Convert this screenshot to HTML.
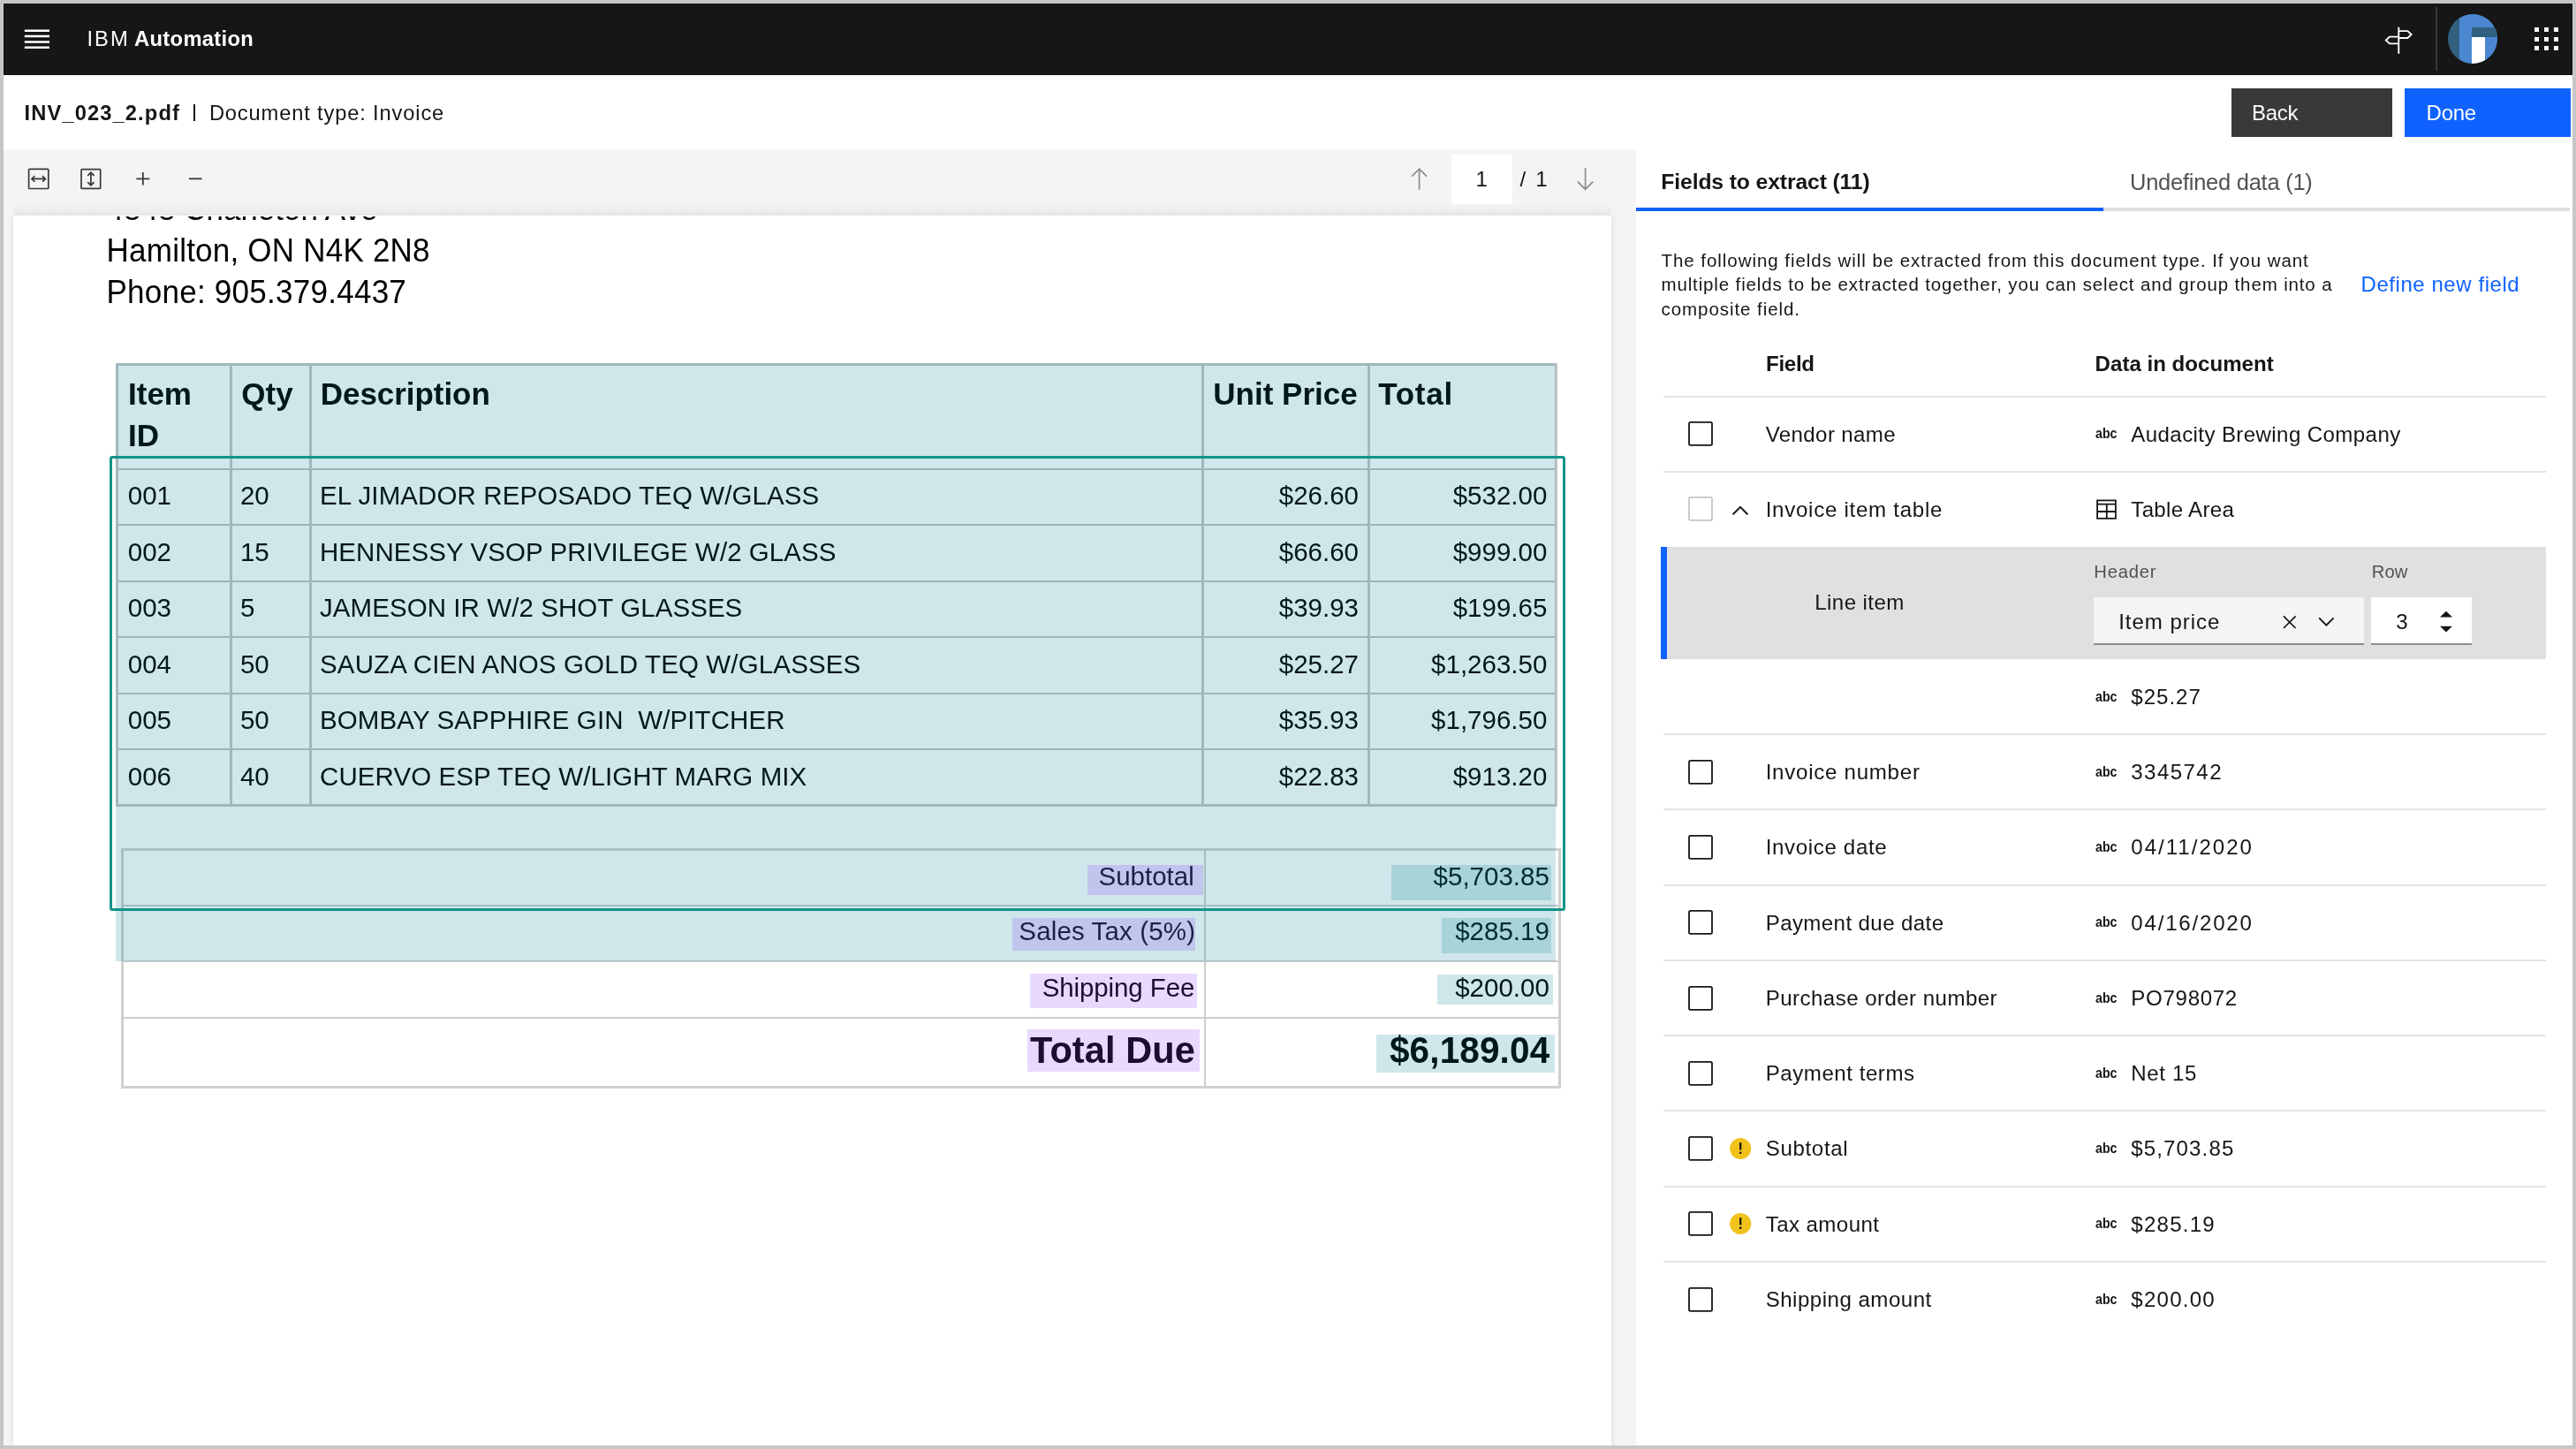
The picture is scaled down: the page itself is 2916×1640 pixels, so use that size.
<!DOCTYPE html>
<html lang="en"><head><meta charset="utf-8"><title>IBM Automation - Document processing</title>
<style>
html,body{margin:0;padding:0}
body{width:2916px;height:1640px;position:relative;overflow:hidden;background:#fff;font-family:"Liberation Sans", sans-serif}
body div,body span,body svg{position:absolute;box-sizing:border-box}
span{white-space:pre}
</style></head><body>
<div style="left:0;top:0;width:2916px;height:1640px;will-change:transform">
<div style="left:0px;top:0px;width:2916px;height:1640px;background:#ffffff;"></div>
<div style="left:4px;top:4px;width:2908px;height:81px;background:#161616;"></div>
<div style="left:4px;top:169px;width:1848px;height:1467px;background:#f4f4f4;"></div>
<div style="left:15px;top:244px;width:1809px;height:1396px;background:#ffffff;box-shadow:0 0 7px rgba(0,0,0,0.10);"></div>
<div style="left:15px;top:244px;width:1809px;height:1396px;overflow:hidden">
<div style="left:-15px;top:-244px;width:2916px;height:1640px">
<div style="left:0;top:245px;width:1000px;height:12px;overflow:hidden"><div style="left:0;top:-245px;width:1000px;height:300px">
<span style="top:216.3px;font-size:35px;line-height:42px;color:#000000;left:120.6px;transform:scaleY(1.042);transform-origin:left 33.5px;">4848 Charleton Ave</span>
</div></div>
<span style="top:262.8px;font-size:35px;line-height:42px;color:#000000;letter-spacing:0.22px;left:120.6px;transform:scaleY(1.042);transform-origin:left 33.5px;">Hamilton, ON N4K 2N8</span>
<span style="top:309.7px;font-size:35px;line-height:42px;color:#000000;letter-spacing:0.26px;left:120.4px;transform:scaleY(1.042);transform-origin:left 33.5px;">Phone: 905.379.4437</span>
<div style="left:131px;top:411px;width:1632px;height:502px;background:transparent;border:3px solid #c6c6c6;"></div>
<div style="left:131px;top:530px;width:1632px;height:2px;background:#c2c2c2;"></div>
<div style="left:131px;top:593px;width:1632px;height:2px;background:#c2c2c2;"></div>
<div style="left:131px;top:657px;width:1632px;height:2px;background:#c2c2c2;"></div>
<div style="left:131px;top:720px;width:1632px;height:2px;background:#c2c2c2;"></div>
<div style="left:131px;top:784px;width:1632px;height:2px;background:#c2c2c2;"></div>
<div style="left:131px;top:847px;width:1632px;height:2px;background:#c2c2c2;"></div>
<div style="left:260px;top:411px;width:3px;height:502px;background:#c6c6c6;"></div>
<div style="left:350px;top:411px;width:3px;height:502px;background:#c6c6c6;"></div>
<div style="left:1360px;top:411px;width:3px;height:502px;background:#c6c6c6;"></div>
<div style="left:1548px;top:411px;width:3px;height:502px;background:#c6c6c6;"></div>
<span style="top:424.8px;font-size:35px;line-height:42px;color:#000000;font-weight:700;left:145px;transform:scaleY(1.026);transform-origin:left 33.5px;">Item</span>
<span style="top:471.5px;font-size:35px;line-height:42px;color:#000000;font-weight:700;left:145px;transform:scaleY(1.026);transform-origin:left 33.5px;">ID</span>
<span style="top:424.8px;font-size:35px;line-height:42px;color:#000000;font-weight:700;left:273.3px;transform:scaleY(1.026);transform-origin:left 33.5px;">Qty</span>
<span style="top:424.8px;font-size:35px;line-height:42px;color:#000000;font-weight:700;letter-spacing:-0.05px;left:362.8px;transform:scaleY(1.026);transform-origin:left 33.5px;">Description</span>
<span style="top:424.8px;font-size:35px;line-height:42px;color:#000000;font-weight:700;left:1373.3px;transform:scaleY(1.026);transform-origin:left 33.5px;">Unit Price</span>
<span style="top:424.8px;font-size:35px;line-height:42px;color:#000000;font-weight:700;letter-spacing:0.75px;left:1560.2px;transform:scaleY(1.026);transform-origin:left 33.5px;">Total</span>
<span style="top:543.1px;font-size:29.5px;line-height:36px;color:#000000;left:144.8px;transform:scaleY(1.025);transform-origin:left 28.5px;">001</span>
<span style="top:543.1px;font-size:29.5px;line-height:36px;color:#000000;left:271.9px;transform:scaleY(1.025);transform-origin:left 28.5px;">20</span>
<span style="top:543.1px;font-size:29.5px;line-height:36px;color:#000000;letter-spacing:0.1px;left:362px;transform:scaleY(1.025);transform-origin:left 28.5px;">EL JIMADOR REPOSADO TEQ W/GLASS</span>
<span style="top:543.1px;font-size:29.5px;line-height:36px;color:#000000;right:1378px;transform:scaleY(1.025);transform-origin:right 28.5px;">$26.60</span>
<span style="top:543.1px;font-size:29.5px;line-height:36px;color:#000000;right:1164.7px;transform:scaleY(1.025);transform-origin:right 28.5px;">$532.00</span>
<span style="top:606.58px;font-size:29.5px;line-height:36px;color:#000000;left:144.8px;transform:scaleY(1.025);transform-origin:left 28.5px;">002</span>
<span style="top:606.58px;font-size:29.5px;line-height:36px;color:#000000;left:271.9px;transform:scaleY(1.025);transform-origin:left 28.5px;">15</span>
<span style="top:606.58px;font-size:29.5px;line-height:36px;color:#000000;letter-spacing:0.06px;left:362px;transform:scaleY(1.025);transform-origin:left 28.5px;">HENNESSY VSOP PRIVILEGE W/2 GLASS</span>
<span style="top:606.58px;font-size:29.5px;line-height:36px;color:#000000;right:1378px;transform:scaleY(1.025);transform-origin:right 28.5px;">$66.60</span>
<span style="top:606.58px;font-size:29.5px;line-height:36px;color:#000000;right:1164.7px;transform:scaleY(1.025);transform-origin:right 28.5px;">$999.00</span>
<span style="top:670.06px;font-size:29.5px;line-height:36px;color:#000000;left:144.8px;transform:scaleY(1.025);transform-origin:left 28.5px;">003</span>
<span style="top:670.06px;font-size:29.5px;line-height:36px;color:#000000;left:271.9px;transform:scaleY(1.025);transform-origin:left 28.5px;">5</span>
<span style="top:670.06px;font-size:29.5px;line-height:36px;color:#000000;letter-spacing:0.07px;left:362px;transform:scaleY(1.025);transform-origin:left 28.5px;">JAMESON IR W/2 SHOT GLASSES</span>
<span style="top:670.06px;font-size:29.5px;line-height:36px;color:#000000;right:1378px;transform:scaleY(1.025);transform-origin:right 28.5px;">$39.93</span>
<span style="top:670.06px;font-size:29.5px;line-height:36px;color:#000000;right:1164.7px;transform:scaleY(1.025);transform-origin:right 28.5px;">$199.65</span>
<span style="top:733.54px;font-size:29.5px;line-height:36px;color:#000000;left:144.8px;transform:scaleY(1.025);transform-origin:left 28.5px;">004</span>
<span style="top:733.54px;font-size:29.5px;line-height:36px;color:#000000;left:271.9px;transform:scaleY(1.025);transform-origin:left 28.5px;">50</span>
<span style="top:733.54px;font-size:29.5px;line-height:36px;color:#000000;letter-spacing:0.14px;left:362px;transform:scaleY(1.025);transform-origin:left 28.5px;">SAUZA CIEN ANOS GOLD TEQ W/GLASSES</span>
<span style="top:733.54px;font-size:29.5px;line-height:36px;color:#000000;right:1378px;transform:scaleY(1.025);transform-origin:right 28.5px;">$25.27</span>
<span style="top:733.54px;font-size:29.5px;line-height:36px;color:#000000;right:1164.7px;transform:scaleY(1.025);transform-origin:right 28.5px;">$1,263.50</span>
<span style="top:797.02px;font-size:29.5px;line-height:36px;color:#000000;left:144.8px;transform:scaleY(1.025);transform-origin:left 28.5px;">005</span>
<span style="top:797.02px;font-size:29.5px;line-height:36px;color:#000000;left:271.9px;transform:scaleY(1.025);transform-origin:left 28.5px;">50</span>
<span style="top:797.02px;font-size:29.5px;line-height:36px;color:#000000;letter-spacing:0.11px;left:362px;transform:scaleY(1.025);transform-origin:left 28.5px;">BOMBAY SAPPHIRE GIN  W/PITCHER</span>
<span style="top:797.02px;font-size:29.5px;line-height:36px;color:#000000;right:1378px;transform:scaleY(1.025);transform-origin:right 28.5px;">$35.93</span>
<span style="top:797.02px;font-size:29.5px;line-height:36px;color:#000000;right:1164.7px;transform:scaleY(1.025);transform-origin:right 28.5px;">$1,796.50</span>
<span style="top:860.5px;font-size:29.5px;line-height:36px;color:#000000;left:144.8px;transform:scaleY(1.025);transform-origin:left 28.5px;">006</span>
<span style="top:860.5px;font-size:29.5px;line-height:36px;color:#000000;left:271.9px;transform:scaleY(1.025);transform-origin:left 28.5px;">40</span>
<span style="top:860.5px;font-size:29.5px;line-height:36px;color:#000000;letter-spacing:0.09px;left:362px;transform:scaleY(1.025);transform-origin:left 28.5px;">CUERVO ESP TEQ W/LIGHT MARG MIX</span>
<span style="top:860.5px;font-size:29.5px;line-height:36px;color:#000000;right:1378px;transform:scaleY(1.025);transform-origin:right 28.5px;">$22.83</span>
<span style="top:860.5px;font-size:29.5px;line-height:36px;color:#000000;right:1164.7px;transform:scaleY(1.025);transform-origin:right 28.5px;">$913.20</span>
<div style="left:137px;top:960px;width:1630px;height:272px;background:transparent;border:3px solid #d0d0d0;"></div>
<div style="left:137px;top:1024px;width:1630px;height:2px;background:#cdcdcd;"></div>
<div style="left:137px;top:1087px;width:1630px;height:2px;background:#cdcdcd;"></div>
<div style="left:137px;top:1151px;width:1630px;height:2px;background:#cdcdcd;"></div>
<div style="left:1363px;top:961px;width:2px;height:269.6px;background:#cdcdcd;"></div>
<span style="top:973.5px;font-size:29.5px;line-height:36px;color:#000000;right:1564.3px;transform:scaleY(1.025);transform-origin:right 28.5px;">Subtotal</span>
<span style="top:1036.3px;font-size:29.5px;line-height:36px;color:#000000;letter-spacing:0.14px;right:1562.86px;transform:scaleY(1.025);transform-origin:right 28.5px;">Sales Tax (5%)</span>
<span style="top:1099.9px;font-size:29.5px;line-height:36px;color:#000000;letter-spacing:-0.1px;right:1563.7px;transform:scaleY(1.025);transform-origin:right 28.5px;">Shipping Fee</span>
<span style="top:1164.1px;font-size:41.5px;line-height:50px;color:#000000;font-weight:700;letter-spacing:0.1px;right:1563.1px;transform:scaleY(1.043);transform-origin:right 39.5px;">Total Due</span>
<span style="top:973.5px;font-size:29.5px;line-height:36px;color:#000000;right:1162.2px;transform:scaleY(1.025);transform-origin:right 28.5px;">$5,703.85</span>
<span style="top:1036.3px;font-size:29.5px;line-height:36px;color:#000000;right:1162.2px;transform:scaleY(1.025);transform-origin:right 28.5px;">$285.19</span>
<span style="top:1099.9px;font-size:29.5px;line-height:36px;color:#000000;right:1162.2px;transform:scaleY(1.025);transform-origin:right 28.5px;">$200.00</span>
<span style="top:1165.3px;font-size:40.5px;line-height:49px;color:#000000;font-weight:700;letter-spacing:0.14px;right:1161.66px;transform:scaleY(1.058);transform-origin:right 38.5px;">$6,189.04</span>
<div style="left:131px;top:411px;width:1630px;height:677px;background:rgba(0,127,143,0.188);"></div>
<div style="left:1231px;top:979px;width:131px;height:34px;background:rgba(138,63,252,0.2);"></div>
<div style="left:1146px;top:1039px;width:207px;height:37px;background:rgba(138,63,252,0.2);"></div>
<div style="left:1166px;top:1102px;width:189px;height:39px;background:rgba(138,63,252,0.2);"></div>
<div style="left:1163px;top:1165px;width:195px;height:48px;background:rgba(138,63,252,0.2);"></div>
<div style="left:1575px;top:979px;width:181px;height:40px;background:rgba(0,127,143,0.188);"></div>
<div style="left:1632px;top:1039px;width:124px;height:40px;background:rgba(0,127,143,0.188);"></div>
<div style="left:1627px;top:1103px;width:131px;height:34px;background:rgba(0,127,143,0.188);"></div>
<div style="left:1558px;top:1171px;width:202px;height:43px;background:rgba(0,127,143,0.188);"></div>
<div style="left:124px;top:516px;width:1648px;height:515px;background:transparent;border:3px solid #129488;border-radius:3px;"></div>
</div></div>
<div style="left:4px;top:169px;width:1848px;height:75px;background:#f4f4f4;"></div>
<div style="left:15px;top:231px;width:1809px;height:13px;background:linear-gradient(to bottom, rgba(0,0,0,0) 0%, rgba(0,0,0,0.055) 100%);"></div>
<div style="left:1852px;top:169px;width:1060px;height:1467px;background:#ffffff;"></div>
<svg style="left:26px;top:30px;width:32px;height:28px;" viewBox="26 30 32 28"><path d="M27.8 34.7H56M27.8 41H56M27.8 47.4H56M27.8 53.7H56" stroke="#fff" stroke-width="2.5" fill="none"/></svg>
<span style="top:30px;font-size:23.7px;line-height:29px;color:#ffffff;letter-spacing:2.09px;left:98.4px;">IBM</span>
<span style="top:30px;font-size:23.7px;line-height:29px;color:#ffffff;font-weight:700;letter-spacing:0.34px;left:152.1px;">Automation</span>
<svg style="left:2696px;top:26px;width:40px;height:40px;" viewBox="2696 26 40 40"><g fill="none" stroke="#fff" stroke-width="1.9" stroke-linejoin="miter"><path d="M2715.3 30.6V60.8"/><path d="M2715.3 35.1H2725.5L2729.6 39L2725.5 43H2715.3"/><path d="M2715.3 41.6H2705L2700.8 45.5L2705 49.4H2715.3"/></g></svg>
<div style="left:2757px;top:8px;width:2px;height:72px;background:#393939;"></div>
<div style="left:2770.7px;top:15.9px;width:56.4px;height:56.4px;border-radius:50%;overflow:hidden;background:#34607f"><div style="left:13.3px;top:0;width:44px;height:57px;background:#4a87d0"></div><div style="left:27.5px;top:15.1px;width:30px;height:11.5px;background:#2f6080"></div><div style="left:27.5px;top:26.6px;width:14.5px;height:31px;background:#ffffff"></div></div>
<div style="left:2869px;top:31px;width:5px;height:5px;background:#ffffff;"></div>
<div style="left:2869px;top:42px;width:5px;height:5px;background:#ffffff;"></div>
<div style="left:2869px;top:52px;width:5px;height:5px;background:#ffffff;"></div>
<div style="left:2880px;top:31px;width:5px;height:5px;background:#ffffff;"></div>
<div style="left:2880px;top:42px;width:5px;height:5px;background:#ffffff;"></div>
<div style="left:2880px;top:52px;width:5px;height:5px;background:#ffffff;"></div>
<div style="left:2891px;top:31px;width:5px;height:5px;background:#ffffff;"></div>
<div style="left:2891px;top:42px;width:5px;height:5px;background:#ffffff;"></div>
<div style="left:2891px;top:52px;width:5px;height:5px;background:#ffffff;"></div>
<span style="top:113.5px;font-size:23.7px;line-height:29px;color:#161616;font-weight:700;letter-spacing:1.11px;left:27.6px;">INV_023_2.pdf</span>
<div style="left:219px;top:118px;width:2px;height:19px;background:#161616;"></div>
<span style="top:113.5px;font-size:23.7px;line-height:29px;color:#161616;letter-spacing:0.85px;left:236.9px;">Document type: Invoice</span>
<div style="left:2526px;top:100px;width:182px;height:55px;background:#393939;"></div>
<span style="top:112.9px;font-size:24px;line-height:29px;color:#ffffff;letter-spacing:-0.32px;left:2549px;">Back</span>
<div style="left:2722px;top:100px;width:188px;height:55px;background:#0f62fe;"></div>
<span style="top:112.9px;font-size:24px;line-height:29px;color:#ffffff;letter-spacing:-0.26px;left:2746.6px;">Done</span>
<svg style="left:28px;top:186px;width:32px;height:32px;" viewBox="28 186 32 32"><g fill="none" stroke="#393939" stroke-width="1.7"><rect x="32.6" y="191.3" width="22.2" height="22.2" rx="1"/><path d="M36 202.4H51.4M39.4 199.2L36 202.4L39.4 205.6M48 199.2L51.4 202.4L48 205.6"/></g></svg>
<svg style="left:87px;top:186px;width:32px;height:32px;" viewBox="87 186 32 32"><g fill="none" stroke="#393939" stroke-width="1.7"><rect x="92" y="191.7" width="21.7" height="21.7" rx="1"/><path d="M102.9 195.3V209.8M99.2 198.9L102.9 195.3L106.6 198.9M99.2 206.2L102.9 209.8L106.6 206.2"/></g></svg>
<svg style="left:150px;top:190px;width:24px;height:24px;" viewBox="150 190 24 24"><path d="M154.3 202.3H169.3M161.8 195V209.6" fill="none" stroke="#393939" stroke-width="1.8"/></svg>
<svg style="left:210px;top:196px;width:22px;height:12px;" viewBox="210 196 22 12"><path d="M213.9 202.3H228.5" fill="none" stroke="#393939" stroke-width="1.8"/></svg>
<svg style="left:1594px;top:186px;width:24px;height:33px;" viewBox="1594 186 24 33"><path d="M1606.6 214.7V191M1598.2 199.6L1606.6 191.2L1615 199.6" fill="none" stroke="#8d8d8d" stroke-width="1.7"/></svg>
<div style="left:1643px;top:175px;width:69px;height:56px;background:#ffffff;"></div>
<span style="top:187.5px;font-size:24px;line-height:29px;color:#161616;left:1670.5px;">1</span>
<span style="top:187.5px;font-size:24px;line-height:29px;color:#161616;letter-spacing:2.16px;left:1720.5px;">/ 1</span>
<svg style="left:1782px;top:186px;width:25px;height:33px;" viewBox="1782 186 25 33"><path d="M1794.6 190.2V214.2M1786 205.6L1794.6 214.2L1803.2 205.6" fill="none" stroke="#8d8d8d" stroke-width="1.7"/></svg>
<span style="top:191.1px;font-size:24.7px;line-height:30px;color:#161616;font-weight:700;letter-spacing:-0.11px;left:1880.3px;">Fields to extract (11)</span>
<span style="top:190.5px;font-size:25.5px;line-height:31px;color:#525252;letter-spacing:-0.26px;left:2411px;">Undefined data (1)</span>
<div style="left:2381px;top:235px;width:528px;height:4px;background:#e0e0e0;"></div>
<div style="left:1852px;top:235px;width:529px;height:4px;background:#0f62fe;"></div>
<span style="top:281.5px;font-size:20.5px;line-height:25px;color:#161616;letter-spacing:0.95px;left:1880.5px;">The following fields will be extracted from this document type. If you want</span>
<span style="top:309.2px;font-size:20.5px;line-height:25px;color:#161616;letter-spacing:0.86px;left:1880.5px;">multiple fields to be extracted together, you can select and group them into a</span>
<span style="top:337px;font-size:20.5px;line-height:25px;color:#161616;letter-spacing:0.94px;left:1880.5px;">composite field.</span>
<span style="top:307px;font-size:24px;line-height:29px;color:#0f62fe;letter-spacing:0.56px;left:2672.5px;">Define new field</span>
<span style="top:396.8px;font-size:24.1px;line-height:29px;color:#161616;font-weight:700;letter-spacing:-0.31px;left:1999px;">Field</span>
<span style="top:396.8px;font-size:24.1px;line-height:29px;color:#161616;font-weight:700;left:2371.6px;">Data in document</span>
<div style="left:1883px;top:448px;width:999px;height:2px;background:#e3e3e3;"></div>
<svg style="left:1909px;top:475.35px;width:32px;height:32px;" viewBox="1909 475.35 32 32"><rect x="1912" y="478.25" width="26" height="26" rx="1.6" fill="#fff" stroke="#161616" stroke-width="1.8"/></svg>
<span style="top:476.55px;font-size:24.1px;line-height:29px;color:#161616;letter-spacing:0.37px;left:1998.7px;">Vendor name</span>
<span style="top:480.25px;font-size:16.5px;line-height:20px;color:#161616;font-weight:700;left:2371.6px;transform:scaleX(0.86);transform-origin:left top;">abc</span>
<span style="top:476.55px;font-size:24.1px;line-height:29px;color:#161616;letter-spacing:0.39px;left:2412.3px;">Audacity Brewing Company</span>
<div style="left:1883px;top:533px;width:999px;height:2px;background:#e3e3e3;"></div>
<svg style="left:1909px;top:560.4px;width:32px;height:32px;" viewBox="1909 560.4 32 32"><rect x="1912" y="563.3" width="26" height="26" rx="1.6" fill="#fff" stroke="#c6c6c6" stroke-width="1.8"/></svg>
<svg style="left:1956px;top:566px;width:28px;height:22px;" viewBox="1956 566 28 22"><path d="M1961.6 582.2L1970 573.8L1978.4 582.2" fill="none" stroke="#161616" stroke-width="2"/></svg>
<span style="top:561.6px;font-size:24.1px;line-height:29px;color:#161616;letter-spacing:0.72px;left:1998.7px;">Invoice item table</span>
<svg style="left:2370px;top:562px;width:30px;height:30px;" viewBox="2370 562 30 30"><g fill="none" stroke="#161616" stroke-width="1.8"><rect x="2374.1" y="566.4" width="20.8" height="20.4"/><path d="M2374.1 570.6H2394.9M2374.1 579H2394.9M2384.8 570.6V586.8"/></g></svg>
<span style="top:561.6px;font-size:24.1px;line-height:29px;color:#161616;letter-spacing:0.3px;left:2412.3px;">Table Area</span>
<div style="left:1880px;top:619px;width:1002px;height:127px;background:#e0e0e0;"></div>
<div style="left:1880px;top:619px;width:7px;height:127px;background:#0f62fe;"></div>
<span style="top:667px;font-size:24.1px;line-height:29px;color:#161616;letter-spacing:0.4px;left:2054.3px;">Line item</span>
<span style="top:635.3px;font-size:20.3px;line-height:25px;color:#525252;letter-spacing:0.75px;left:2370.3px;">Header</span>
<span style="top:635.3px;font-size:20.3px;line-height:25px;color:#525252;letter-spacing:-0.04px;left:2684.8px;">Row</span>
<div style="left:2370px;top:676px;width:306px;height:54px;background:#f4f4f4;border-bottom:2px solid #8d8d8d;"></div>
<span style="top:689px;font-size:24.1px;line-height:29px;color:#161616;letter-spacing:0.95px;left:2398.2px;">Item price</span>
<svg style="left:2580px;top:692px;width:24px;height:24px;" viewBox="2580 692 24 24"><path d="M2585 697.4L2598.6 711M2598.6 697.4L2585 711" fill="none" stroke="#161616" stroke-width="1.7"/></svg>
<svg style="left:2620px;top:692px;width:28px;height:24px;" viewBox="2620 692 28 24"><path d="M2625.2 699.4L2633.4 707.6L2641.6 699.4" fill="none" stroke="#161616" stroke-width="1.9"/></svg>
<div style="left:2684px;top:676px;width:114px;height:54px;background:#ffffff;border-bottom:2px solid #8d8d8d;"></div>
<span style="top:689px;font-size:24.1px;line-height:29px;color:#161616;left:2712.2px;">3</span>
<svg style="left:2758px;top:688px;width:22px;height:32px;" viewBox="2758 688 22 32"><path d="M2762 698.6L2769 691.8L2776 698.6ZM2762 708.8L2769 715.6L2776 708.8Z" fill="#161616"/></svg>
<span style="top:777.8px;font-size:16.5px;line-height:20px;color:#161616;font-weight:700;left:2371.6px;transform:scaleX(0.86);transform-origin:left top;">abc</span>
<span style="top:774.1px;font-size:24.1px;line-height:29px;color:#161616;letter-spacing:0.96px;left:2412.3px;">$25.27</span>
<div style="left:1883px;top:830px;width:999px;height:2px;background:#e3e3e3;"></div>
<svg style="left:1909px;top:857.9px;width:32px;height:32px;" viewBox="1909 857.9 32 32"><rect x="1912" y="860.8" width="26" height="26" rx="1.6" fill="#fff" stroke="#161616" stroke-width="1.8"/></svg>
<span style="top:859.1px;font-size:24.1px;line-height:29px;color:#161616;letter-spacing:0.73px;left:1998.7px;">Invoice number</span>
<span style="top:862.8px;font-size:16.5px;line-height:20px;color:#161616;font-weight:700;left:2371.6px;transform:scaleX(0.86);transform-origin:left top;">abc</span>
<span style="top:859.1px;font-size:24.1px;line-height:29px;color:#161616;letter-spacing:1.41px;left:2412.3px;">3345742</span>
<div style="left:1883px;top:915px;width:999px;height:2px;background:#e3e3e3;"></div>
<svg style="left:1909px;top:943.15px;width:32px;height:32px;" viewBox="1909 943.15 32 32"><rect x="1912" y="946.05" width="26" height="26" rx="1.6" fill="#fff" stroke="#161616" stroke-width="1.8"/></svg>
<span style="top:944.35px;font-size:24.1px;line-height:29px;color:#161616;letter-spacing:0.64px;left:1998.7px;">Invoice date</span>
<span style="top:948.05px;font-size:16.5px;line-height:20px;color:#161616;font-weight:700;left:2371.6px;transform:scaleX(0.86);transform-origin:left top;">abc</span>
<span style="top:944.35px;font-size:24.1px;line-height:29px;color:#161616;letter-spacing:1.98px;left:2412.3px;">04/11/2020</span>
<div style="left:1883px;top:1001px;width:999px;height:2px;background:#e3e3e3;"></div>
<svg style="left:1909px;top:1028.4px;width:32px;height:32px;" viewBox="1909 1028.4 32 32"><rect x="1912" y="1031.3" width="26" height="26" rx="1.6" fill="#fff" stroke="#161616" stroke-width="1.8"/></svg>
<span style="top:1029.6px;font-size:24.1px;line-height:29px;color:#161616;letter-spacing:0.39px;left:1998.7px;">Payment due date</span>
<span style="top:1033.3px;font-size:16.5px;line-height:20px;color:#161616;font-weight:700;left:2371.6px;transform:scaleX(0.86);transform-origin:left top;">abc</span>
<span style="top:1029.6px;font-size:24.1px;line-height:29px;color:#161616;letter-spacing:1.78px;left:2412.3px;">04/16/2020</span>
<div style="left:1883px;top:1086px;width:999px;height:2px;background:#e3e3e3;"></div>
<svg style="left:1909px;top:1113.65px;width:32px;height:32px;" viewBox="1909 1113.65 32 32"><rect x="1912" y="1116.55" width="26" height="26" rx="1.6" fill="#fff" stroke="#161616" stroke-width="1.8"/></svg>
<span style="top:1114.85px;font-size:24.1px;line-height:29px;color:#161616;letter-spacing:0.44px;left:1998.7px;">Purchase order number</span>
<span style="top:1118.55px;font-size:16.5px;line-height:20px;color:#161616;font-weight:700;left:2371.6px;transform:scaleX(0.86);transform-origin:left top;">abc</span>
<span style="top:1114.85px;font-size:24.1px;line-height:29px;color:#161616;letter-spacing:0.68px;left:2412.3px;">PO798072</span>
<div style="left:1883px;top:1171px;width:999px;height:2px;background:#e3e3e3;"></div>
<svg style="left:1909px;top:1198.9px;width:32px;height:32px;" viewBox="1909 1198.9 32 32"><rect x="1912" y="1201.8" width="26" height="26" rx="1.6" fill="#fff" stroke="#161616" stroke-width="1.8"/></svg>
<span style="top:1200.1px;font-size:24.1px;line-height:29px;color:#161616;letter-spacing:0.53px;left:1998.7px;">Payment terms</span>
<span style="top:1203.8px;font-size:16.5px;line-height:20px;color:#161616;font-weight:700;left:2371.6px;transform:scaleX(0.86);transform-origin:left top;">abc</span>
<span style="top:1200.1px;font-size:24.1px;line-height:29px;color:#161616;letter-spacing:0.6px;left:2412.3px;">Net 15</span>
<div style="left:1883px;top:1256px;width:999px;height:2px;background:#e3e3e3;"></div>
<svg style="left:1909px;top:1284.15px;width:32px;height:32px;" viewBox="1909 1284.15 32 32"><rect x="1912" y="1287.05" width="26" height="26" rx="1.6" fill="#fff" stroke="#161616" stroke-width="1.8"/></svg>
<svg style="left:1956px;top:1286.05px;width:28px;height:28px;" viewBox="1956 1286.05 28 28"><circle cx="1970.2" cy="1300.05" r="12" fill="#f1c21b"/><rect x="1969.1" y="1293.25" width="2.2" height="8.3" fill="#161616"/><rect x="1969.1" y="1303.65" width="2.2" height="2.4" fill="#161616"/></svg>
<span style="top:1285.35px;font-size:24.1px;line-height:29px;color:#161616;letter-spacing:0.65px;left:1998.7px;">Subtotal</span>
<span style="top:1289.05px;font-size:16.5px;line-height:20px;color:#161616;font-weight:700;left:2371.6px;transform:scaleX(0.86);transform-origin:left top;">abc</span>
<span style="top:1285.35px;font-size:24.1px;line-height:29px;color:#161616;letter-spacing:1.1px;left:2412.3px;">$5,703.85</span>
<div style="left:1883px;top:1342px;width:999px;height:2px;background:#e3e3e3;"></div>
<svg style="left:1909px;top:1369.4px;width:32px;height:32px;" viewBox="1909 1369.4 32 32"><rect x="1912" y="1372.3" width="26" height="26" rx="1.6" fill="#fff" stroke="#161616" stroke-width="1.8"/></svg>
<svg style="left:1956px;top:1371.3px;width:28px;height:28px;" viewBox="1956 1371.3 28 28"><circle cx="1970.2" cy="1385.3" r="12" fill="#f1c21b"/><rect x="1969.1" y="1378.5" width="2.2" height="8.3" fill="#161616"/><rect x="1969.1" y="1388.9" width="2.2" height="2.4" fill="#161616"/></svg>
<span style="top:1370.6px;font-size:24.1px;line-height:29px;color:#161616;letter-spacing:0.42px;left:1998.7px;">Tax amount</span>
<span style="top:1374.3px;font-size:16.5px;line-height:20px;color:#161616;font-weight:700;left:2371.6px;transform:scaleX(0.86);transform-origin:left top;">abc</span>
<span style="top:1370.6px;font-size:24.1px;line-height:29px;color:#161616;letter-spacing:1.22px;left:2412.3px;">$285.19</span>
<div style="left:1883px;top:1427px;width:999px;height:2px;background:#e3e3e3;"></div>
<svg style="left:1909px;top:1454.65px;width:32px;height:32px;" viewBox="1909 1454.65 32 32"><rect x="1912" y="1457.55" width="26" height="26" rx="1.6" fill="#fff" stroke="#161616" stroke-width="1.8"/></svg>
<span style="top:1455.85px;font-size:24.1px;line-height:29px;color:#161616;letter-spacing:0.48px;left:1998.7px;">Shipping amount</span>
<span style="top:1459.55px;font-size:16.5px;line-height:20px;color:#161616;font-weight:700;left:2371.6px;transform:scaleX(0.86);transform-origin:left top;">abc</span>
<span style="top:1455.85px;font-size:24.1px;line-height:29px;color:#161616;letter-spacing:1.22px;left:2412.3px;">$200.00</span>
<div style="left:0px;top:0px;width:2916px;height:4px;background:#c6c6c6;"></div>
<div style="left:0px;top:1636px;width:2916px;height:4px;background:#c6c6c6;"></div>
<div style="left:0px;top:0px;width:4px;height:1640px;background:#c6c6c6;"></div>
<div style="left:2912px;top:0px;width:4px;height:1640px;background:#c6c6c6;"></div>
</div>
</body></html>
